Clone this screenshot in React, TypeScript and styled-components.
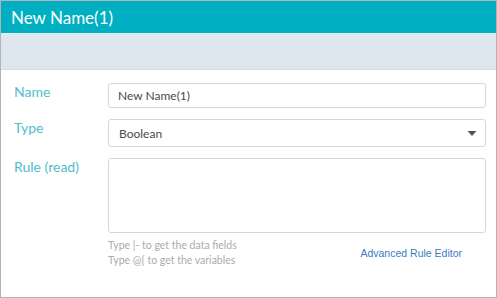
import styled, { createGlobalStyle } from "styled-components";

const GlobalStyle = createGlobalStyle`
    html, body {
        margin: 0;
        padding: 0;
        background: #ffffff;
    }
    * {
        box-sizing: border-box;
    }
`

const fields = {
    name: "New Name(1)",
    type: "Boolean",
    hints: ["Type |- to get the data fields", "Type @{ to get the variables"],
}

export default function App() {
    return (<>
        <GlobalStyle/>
        <Frame>
            <Header>{fields.name}</Header>
            <Band/>
            <Form>
                <Row>
                    <Label>Name</Label>
                    <TextInput defaultValue={fields.name}/>
                </Row>
                <Row>
                    <Label>Type</Label>
                    <Select>
                        <span>{fields.type}</span>
                        <Caret/>
                    </Select>
                </Row>
                <Row>
                    <Label>Rule (read)</Label>
                    <Field>
                        <RuleArea/>
                        <HelpRow>
                            <Hints>
                                {fields.hints.map(h => <div key={h}>{h}</div>)}
                            </Hints>
                            <EditorLink href="#">Advanced Rule Editor</EditorLink>
                        </HelpRow>
                    </Field>
                </Row>
            </Form>
        </Frame>
    </>)
}

const Caret = () => (<svg width="10" height="5" viewBox="0 0 10 5">
    <path d="M0.5 0H9.5L5 5Z" fill="#555555"/>
</svg>)

const Frame = styled.div`
    width: 497px;
    height: 298px;
    border: 1px solid #b4b4b4;
    display: flex;
    flex-direction: column;
    font-family: Lato, "Open Sans", sans-serif;
`

const Header = styled.div`
    height: 32px;
    background: #00afc2;
    color: #ffffff;
    font-size: 17px;
    padding-left: 10px;
    display: flex;
    align-items: center;
`

const Band = styled.div`
    height: 37px;
    background: #dde7ed;
    border-top: 1px solid #e4ecf0;
    border-bottom: 1px solid #d3dde3;
`

const Form = styled.div`
    padding: 13px 10px 0 13px;
    display: flex;
    flex-direction: column;
    gap: 11px;
`

const Row = styled.div`
    display: flex;
    align-items: flex-start;
`

const Label = styled.div`
    width: 94px;
    flex: none;
    color: #52bdcd;
    font-size: 14px;
    line-height: 17px;
`

const TextInput = styled.input`
    width: 378px;
    height: 25px;
    border: 1px solid #d6d6d6;
    border-radius: 3px;
    padding: 0 9px;
    font-family: Lato, "Open Sans", sans-serif;
    font-size: 12px;
    color: #4a4a4a;
    outline: none;
`

const Select = styled.div`
    width: 378px;
    height: 28px;
    border: 1px solid #d6d6d6;
    border-radius: 3px;
    padding: 0 8px 0 10px;
    display: flex;
    align-items: center;
    justify-content: space-between;
    font-size: 12px;
    color: #4a4a4a;
`

const Field = styled.div`
    width: 378px;
    display: flex;
    flex-direction: column;
`

const RuleArea = styled.textarea`
    width: 378px;
    height: 75px;
    border: 1px solid #d6d6d6;
    border-radius: 3px;
    resize: none;
    outline: none;
`

const HelpRow = styled.div`
    display: flex;
    align-items: center;
    justify-content: space-between;
    padding: 5px 24px 0 0;
`

const Hints = styled.div`
    color: #ababab;
    font-size: 10.5px;
    line-height: 15px;
`

const EditorLink = styled.a`
    color: #3b7cc0;
    font-family: "Liberation Sans", Arial, sans-serif;
    font-size: 10.5px;
    text-decoration: none;
`
